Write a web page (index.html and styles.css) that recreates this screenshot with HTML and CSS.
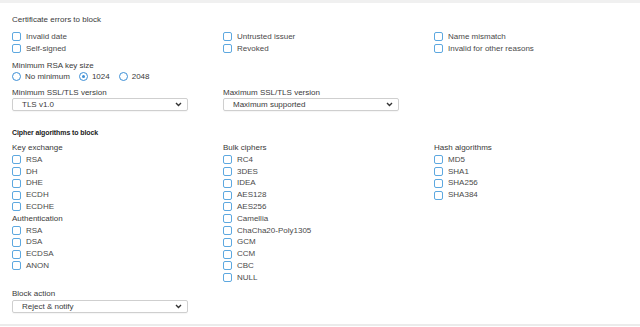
FILE: index.html
```html
<!DOCTYPE html>
<html lang="en">

<head>
  <meta charset="UTF-8" />
  <meta name="viewport" content="width=device-width,initial-scale=1" />
  <title>TLS decryption settings</title>
  <link rel="stylesheet" href="styles.css">
</head>

<body>
  <div class="panel">
    <div class="title">Certificate errors to block</div>
    <div class="cols cert">
      <div class="col">
        <div class="check"><span class="box"></span>Invalid date</div>
        <div class="check"><span class="box"></span>Self-signed</div>
      </div>
      <div class="col">
        <div class="check"><span class="box"></span>Untrusted issuer</div>
        <div class="check"><span class="box"></span>Revoked</div>
      </div>
      <div class="col">
        <div class="check"><span class="box"></span>Name mismatch</div>
        <div class="check"><span class="box"></span>Invalid for other reasons</div>
      </div>
    </div>

    <div class="label rsa-label">Minimum RSA key size</div>
    <div class="radios">
      <div class="radio"><span class="ring"></span>No minimum</div>
      <div class="radio"><span class="ring on"></span>1024</div>
      <div class="radio"><span class="ring"></span>2048</div>
    </div>

    <div class="cols versions">
      <div class="col">
        <div class="label">Minimum SSL/TLS version</div>
        <div class="select">
          <span>TLS v1.0</span>
          <svg width="7" height="5" viewBox="0 0 7 5"><path d="M1 1l2.5 2.5L6 1" fill="none" stroke="#333" stroke-width="1.4" /></svg>
        </div>
      </div>
      <div class="col">
        <div class="label">Maximum SSL/TLS version</div>
        <div class="select">
          <span>Maximum supported</span>
          <svg width="7" height="5" viewBox="0 0 7 5"><path d="M1 1l2.5 2.5L6 1" fill="none" stroke="#333" stroke-width="1.4" /></svg>
        </div>
      </div>
    </div>

    <div class="heading">Cipher algorithms to block</div>
    <div class="cols ciphers">
      <div class="col">
        <div class="label">Key exchange</div>
        <div class="check"><span class="box"></span>RSA</div>
        <div class="check"><span class="box"></span>DH</div>
        <div class="check"><span class="box"></span>DHE</div>
        <div class="check"><span class="box"></span>ECDH</div>
        <div class="check"><span class="box"></span>ECDHE</div>
        <div class="label">Authentication</div>
        <div class="check"><span class="box"></span>RSA</div>
        <div class="check"><span class="box"></span>DSA</div>
        <div class="check"><span class="box"></span>ECDSA</div>
        <div class="check"><span class="box"></span>ANON</div>
      </div>
      <div class="col">
        <div class="label">Bulk ciphers</div>
        <div class="check"><span class="box"></span>RC4</div>
        <div class="check"><span class="box"></span>3DES</div>
        <div class="check"><span class="box"></span>IDEA</div>
        <div class="check"><span class="box"></span>AES128</div>
        <div class="check"><span class="box"></span>AES256</div>
        <div class="check"><span class="box"></span>Camellia</div>
        <div class="check"><span class="box"></span>ChaCha20-Poly1305</div>
        <div class="check"><span class="box"></span>GCM</div>
        <div class="check"><span class="box"></span>CCM</div>
        <div class="check"><span class="box"></span>CBC</div>
        <div class="check"><span class="box"></span>NULL</div>
      </div>
      <div class="col">
        <div class="label">Hash algorithms</div>
        <div class="check"><span class="box"></span>MD5</div>
        <div class="check"><span class="box"></span>SHA1</div>
        <div class="check"><span class="box"></span>SHA256</div>
        <div class="check"><span class="box"></span>SHA384</div>
      </div>
    </div>

    <div class="label action-label">Block action</div>
    <div class="select">
      <span>Reject &amp; notify</span>
      <svg width="7" height="5" viewBox="0 0 7 5"><path d="M1 1l2.5 2.5L6 1" fill="none" stroke="#333" stroke-width="1.4" /></svg>
    </div>
  </div>
</body>

</html>
```

FILE: styles.css
```css
* {
  box-sizing: border-box;
  margin: 0;
  padding: 0;
}

body {
  font-family: "Liberation Sans", Arial, sans-serif;
  font-size: 8px;
  color: #444;
  background: #fff;
}

.panel {
  border-top: 3px solid #f0f0f0;
  border-bottom: 2px solid #ebebeb;
  padding: 10.5px 12px 12px;
  height: 326px;
}

.title,
.label {
  height: 11px;
  line-height: 11px;
  color: #3a3a3a;
}

.cols {
  display: grid;
  grid-template-columns: 211px 211px 1fr;
}

.cert {
  margin-top: 5.5px;
}

.check {
  display: flex;
  align-items: center;
  height: 12px;
  color: #4a4a4a;
}

.box {
  width: 9px;
  height: 9px;
  border: 1.3px solid #5da8e0;
  border-radius: 2px;
  margin-right: 5px;
  flex: none;
}

.rsa-label {
  margin-top: 5.5px;
}

.radios {
  display: flex;
  gap: 9px;
  height: 11px;
}

.radio {
  display: flex;
  align-items: center;
  color: #3a3a3a;
}

.ring {
  width: 9px;
  height: 9px;
  border: 1.3px solid #3d8fd6;
  border-radius: 50%;
  margin-right: 4px;
  display: flex;
  align-items: center;
  justify-content: center;
}

.ring.on::after {
  content: "";
  width: 3px;
  height: 3px;
  border-radius: 50%;
  background: #3d8fd6;
}

.versions {
  margin-top: 5px;
}

.select {
  width: 176px;
  height: 13px;
  margin-top: 0.5px;
  border: 1px solid #cfcfcf;
  border-radius: 2px;
  box-shadow: 0 1px 1px rgba(0, 0, 0, 0.04);
  display: flex;
  align-items: center;
  justify-content: space-between;
  padding: 0 5px 0 9px;
  color: #3a3a3a;
}

.heading {
  margin-top: 15.5px;
  height: 11px;
  line-height: 11px;
  font-size: 7px;
  font-weight: bold;
  color: #222;
  letter-spacing: -0.1px;
}

.ciphers {
  margin-top: 4.6px;
}

.ciphers .label,
.ciphers .check {
  height: 11.8px;
  line-height: 11.8px;
}

.action-label {
  margin-top: 4.8px;
}
```
